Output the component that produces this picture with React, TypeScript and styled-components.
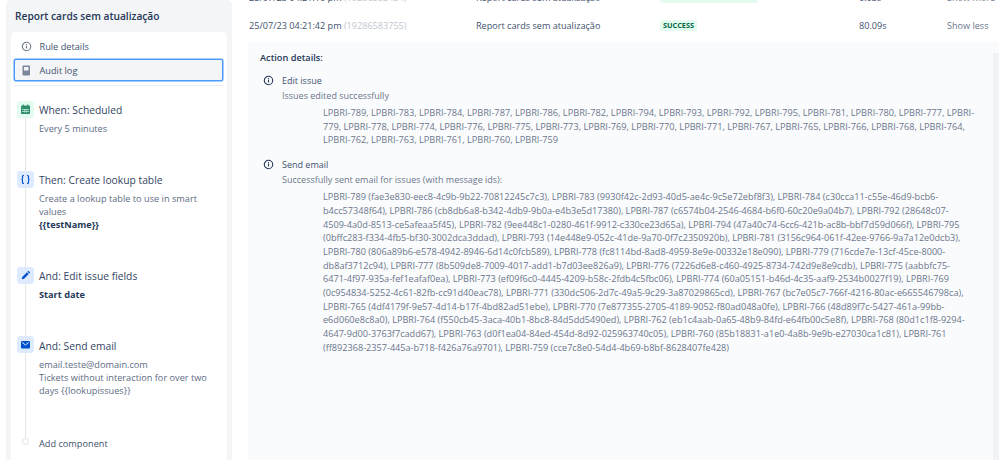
import React from "react";
import styled, { createGlobalStyle } from "styled-components";

const Global = createGlobalStyle`
  html, body { margin: 0; padding: 0; background: #fff; height: 460px; overflow: hidden; }
  body { font-family: "Open Sans", "Noto Sans", "Liberation Sans", sans-serif; font-size: 9.2px; color: #42526e; }
`;

const Page = styled.div`
  display: flex;
  width: 999px;
  height: 460px;
  overflow: hidden;
`;
const Sidebar = styled.aside`
  flex: none;
  width: 226px;
  margin-left: 6px;
  padding: 0 5px;
  box-sizing: border-box;
  background: #f4f5f7;
  border-radius: 5px 5px 0 0;
  display: flex;
  flex-direction: column;
`;
const RuleTitle = styled.h1`
  margin: 0;
  height: 32px;
  padding-left: 4px;
  line-height: 33px;
  font-size: 10.2px;
  font-weight: 600;
  color: #253858;
  white-space: nowrap;
`;
const Card = styled.div`
  flex: 1;
  background: #fff;
  border-radius: 4px 4px 0 0;
  padding: 3px 3px 0;
`;
const NavItem = styled.div<{ $active?: boolean }>`
  display: flex;
  align-items: center;
  gap: 7px;
  height: 22px;
  width: 209px;
  padding-left: 5.5px;
  margin-bottom: 2px;
  box-sizing: border-box;
  border-radius: 2px;
  border: 1px solid ${(p) => (p.$active ? "#4c9aff" : "transparent")};
  box-shadow: ${(p) => (p.$active ? "0 0 0 0.5px #4c9aff" : "none")};
  background: ${(p) => (p.$active ? "#f4f5f7" : "transparent")};
  color: #42526e;
  font-size: 9.2px;
`;
const NavIcon = styled.span`
  width: 12px;
  display: flex;
  justify-content: center;
  color: #6b778c;
`;
const Divider = styled.div`
  height: 1px;
  width: 209px;
  background: #ebecf0;
  margin: 4px 0 15px;
`;
const Step = styled.div<{ $h: number }>`
  display: grid;
  grid-template-columns: 17px 1fr;
  column-gap: 5px;
  height: ${(p) => p.$h}px;
  margin-left: 3px;
`;
const Rail = styled.div`
  display: flex;
  flex-direction: column;
  align-items: center;
`;
const RailLine = styled.div`
  flex: 1;
  width: 1.5px;
  background: #e4e6ea;
`;
const IconBox = styled.div<{ $green?: boolean }>`
  flex: none;
  width: 17px;
  height: 17px;
  border-radius: 3px;
  display: flex;
  align-items: center;
  justify-content: center;
  background: ${(p) => (p.$green ? "#e3fcef" : "#deebff")};
  color: ${(p) => (p.$green ? "#2f8f6b" : "#0052cc")};
`;
const Dot = styled.div`
  width: 5px;
  height: 5px;
  border-radius: 50%;
  border: 1.5px solid #dfe1e6;
  background: #fff;
`;
const StepBody = styled.div<{ $top?: number }>`
  min-width: 0;
  padding-top: ${(p) => p.$top ?? 2}px;
`;
const StepTitle = styled.div`
  font-size: 10.3px;
  line-height: 15px;
  color: #344563;
  margin-bottom: 4px;
  white-space: nowrap;
`;
const StepText = styled.div`
  font-size: 9.2px;
  line-height: 13px;
  color: #5e6c84;
  white-space: nowrap;
`;
const StepStrong = styled(StepText)`
  font-weight: 700;
  color: #253858;
`;
const AddLabel = styled.div`
  font-size: 9.2px;
  line-height: 13px;
  color: #42526e;
  margin-top: -1px;
`;
const Main = styled.main`
  flex: 1;
  min-width: 0;
  margin-left: 16px;
`;
const LogTable = styled.div`
  margin-top: -17px;
`;
const LogRow = styled.div`
  display: grid;
  grid-template-columns: 227px 184px 199px 88px 52px;
  height: 28px;
  padding-left: 1px;
  align-items: center;
  font-size: 9.1px;
  color: #42526e;
  white-space: nowrap;
`;
const LogId = styled.span`
  color: #c1c7d0;
`;
const Badge = styled.span`
  justify-self: start;
  padding: 0 3px;
  height: 11px;
  line-height: 11px;
  border-radius: 2px;
  background: #e3fcef;
  color: #006644;
  font-size: 7.3px;
  font-weight: 700;
`;
const Muted = styled.span`
  color: #6b778c;
`;
const Details = styled.section`
  height: 420px;
  margin-top: 3px;
  padding: 9px 0 0 12px;
  background: #fafbfc;
  position: relative;
`;
const DetailHead = styled.div`
  font-size: 9.2px;
  font-weight: 600;
  color: #253858;
  line-height: 14px;
  margin-bottom: 8px;
`;
const ScrollStrip = styled.div`
  position: absolute;
  right: 0;
  top: 11px;
  bottom: 0;
  width: 6px;
  background: #f1f2f5;
`;
const Entry = styled.div`
  display: grid;
  grid-template-columns: 22px 1fr;
  margin-bottom: 10px;
`;
const EntryIcon = styled.div`
  display: flex;
  justify-content: flex-start;
  padding: 2px 0 0 3px;
  color: #253858;
`;
const EntryTitle = styled.div`
  font-size: 9px;
  line-height: 15px;
  color: #42526e;
`;
const EntrySub = styled.div`
  font-size: 9px;
  line-height: 16px;
  color: #6b778c;
`;
const IdList = styled.div<{ $size: number }>`
  margin: 2px 0 0 41px;
  font-size: ${(p) => p.$size}px;
  line-height: 13.7px;
  color: #6b778c;
`;
const IdLine = styled.div`
  white-space: nowrap;
`;

const InfoIcon = ({ size = 12 }: { size?: number }) => (
  <svg width={size} height={size} viewBox="0 0 12 12" fill="none">
    <circle cx="6" cy="6" r="4.6" stroke="currentColor" strokeWidth="1.2" />
    <rect x="5.4" y="5.2" width="1.2" height="3" fill="currentColor" />
    <rect x="5.4" y="3.4" width="1.2" height="1.2" fill="currentColor" />
  </svg>
);

const editLines = [
  "LPBRI-789, LPBRI-783, LPBRI-784, LPBRI-787, LPBRI-786, LPBRI-782, LPBRI-794, LPBRI-793, LPBRI-792, LPBRI-795, LPBRI-781, LPBRI-780, LPBRI-777, LPBRI-",
  "779, LPBRI-778, LPBRI-774, LPBRI-776, LPBRI-775, LPBRI-773, LPBRI-769, LPBRI-770, LPBRI-771, LPBRI-767, LPBRI-765, LPBRI-766, LPBRI-768, LPBRI-764,",
  "LPBRI-762, LPBRI-763, LPBRI-761, LPBRI-760, LPBRI-759",
];
const mailLines = [
  "LPBRI-789 (fae3e830-eec8-4c9b-9b22-70812245c7c3), LPBRI-783 (9930f42c-2d93-40d5-ae4c-9c5e72ebf8f3), LPBRI-784 (c30cca11-c55e-46d9-bcb6-",
  "b4cc57348f64), LPBRI-786 (cb8db6a8-b342-4db9-9b0a-e4b3e5d17380), LPBRI-787 (c6574b04-2546-4684-b6f0-60c20e9a04b7), LPBRI-792 (28648c07-",
  "4509-4a0d-8513-ce5afeaa5f45), LPBRI-782 (9ee448c1-0280-461f-9912-c330ce23d65a), LPBRI-794 (47a40c74-6cc6-421b-ac8b-bbf7d59d066f), LPBRI-795",
  "(0bffc283-f334-4fb5-bf30-3002dca3ddad), LPBRI-793 (14e448e9-052c-41de-9a70-0f7c2350920b), LPBRI-781 (3156c964-061f-42ee-9766-9a7a12e0dcb3),",
  "LPBRI-780 (806a89b6-e578-4942-8946-6d14c0fcb589), LPBRI-778 (fc8114bd-8ad8-4959-8e9e-00332e18e090), LPBRI-779 (716cde7e-13cf-45ce-8000-",
  "db8af3712c94), LPBRI-777 (8b509de8-7009-4017-add1-b7d03ee826a9), LPBRI-776 (7226d6e8-c460-4925-8734-742d9e8e9cdb), LPBRI-775 (aabbfc75-",
  "6471-4f97-935a-fef1eafaf0ea), LPBRI-773 (ef09f6c0-4445-4209-b58c-2fdb4c5fbc06), LPBRI-774 (60a05151-b46d-4c35-aaf9-2534b0027f19), LPBRI-769",
  "(0c954834-5252-4c61-82fb-cc91d40eac78), LPBRI-771 (330dc506-2d7c-49a5-9c29-3a87029865cd), LPBRI-767 (bc7e05c7-766f-4216-80ac-e665546798ca),",
  "LPBRI-765 (4df4179f-9e57-4d14-b17f-4bd82ad51ebe), LPBRI-770 (7e877355-2705-4189-9052-f80ad048a0fe), LPBRI-766 (48d89f7c-5427-461a-99bb-",
  "e6d060e8c8a0), LPBRI-764 (f550cb45-3aca-40b1-8bc8-84d5dd5490ed), LPBRI-762 (eb1c4aab-0a65-48b9-84fd-e64fb00c5e8f), LPBRI-768 (80d1c1f8-9294-",
  "4647-9d00-3763f7cadd67), LPBRI-763 (d0f1ea04-84ed-454d-8d92-025963740c05), LPBRI-760 (85b18831-a1e0-4a8b-9e9b-e27030ca1c81), LPBRI-761",
  "(ff892368-2357-445a-b718-f426a76a9701), LPBRI-759 (cce7c8e0-54d4-4b69-b8bf-8628407fe428)",
];

export default function App() {
  return (
    <Page>
      <Global />
      <Sidebar>
        <RuleTitle>Report cards sem atualização</RuleTitle>
        <Card>
          <NavItem>
            <NavIcon><InfoIcon size={11} /></NavIcon>
            Rule details
          </NavItem>
          <NavItem $active>
            <NavIcon>
              <svg width="9" height="11" viewBox="0 0 9 11">
                <rect x="0.5" y="0.5" width="7.5" height="10" rx="1" fill="#7a869a" />
                <rect x="2" y="2" width="4.5" height="3.5" fill="#f4f5f7" />
              </svg>
            </NavIcon>
            Audit log
          </NavItem>
          <Divider />
          <Step $h={70}>
            <Rail>
              <IconBox $green>
                <svg width="11" height="11" viewBox="0 0 11 11">
                  <rect x="1" y="1.5" width="9" height="8.5" rx="1" fill="currentColor" />
                  <rect x="2.6" y="0.5" width="1.2" height="2" fill="currentColor" />
                  <rect x="7.2" y="0.5" width="1.2" height="2" fill="currentColor" />
                  <rect x="2" y="5" width="7" height="0.8" fill="#bfe8d6" />
                  <rect x="2" y="7" width="7" height="0.8" fill="#bfe8d6" />
                  <rect x="4" y="5" width="0.7" height="3.6" fill="#bfe8d6" />
                  <rect x="6.3" y="5" width="0.7" height="3.6" fill="#bfe8d6" />
                </svg>
              </IconBox>
              <RailLine />
            </Rail>
            <StepBody>
              <StepTitle>When: Scheduled</StepTitle>
              <StepText>Every 5 minutes</StepText>
            </StepBody>
          </Step>
          <Step $h={96}>
            <Rail>
              <IconBox>
                <svg width="11" height="11" viewBox="0 0 11 11" fill="none" stroke="currentColor" strokeWidth="1.2">
                  <path d="M4 1.5H3.4c-.6 0-.9.4-.9 1v1.7c0 .7-.4 1.3-1 1.3.6 0 1 .6 1 1.3v1.7c0 .6.3 1 .9 1H4" />
                  <path d="M7 1.5h.6c.6 0 .9.4.9 1v1.7c0 .7.4 1.3 1 1.3-.6 0-1 .6-1 1.3v1.7c0 .6-.3 1-.9 1H7" />
                </svg>
              </IconBox>
              <RailLine />
            </Rail>
            <StepBody>
              <StepTitle>Then: Create lookup table</StepTitle>
              <StepText>Create a lookup table to use in smart</StepText>
              <StepText>values</StepText>
              <StepStrong>{"{{testName}}"}</StepStrong>
            </StepBody>
          </Step>
          <Step $h={69}>
            <Rail>
              <IconBox>
                <svg width="11" height="11" viewBox="0 0 11 11">
                  <path d="M2.3 6.9 6.9 2.3l1.8 1.8-4.6 4.6-2.4.6z" fill="currentColor" />
                  <path d="M7.5 1.7l.5-.5c.3-.3.6-.3.9 0l.9.9c.3.3.3.6 0 .9l-.5.5z" fill="currentColor" />
                </svg>
              </IconBox>
              <RailLine />
            </Rail>
            <StepBody>
              <StepTitle>And: Edit issue fields</StepTitle>
              <StepStrong>Start date</StepStrong>
            </StepBody>
          </Step>
          <Step $h={102}>
            <Rail>
              <IconBox>
                <svg width="11" height="11" viewBox="0 0 11 11">
                  <rect x="1" y="2" width="9" height="7.4" rx="1" fill="currentColor" />
                  <path d="M2.2 3.4 5.5 6l3.3-2.6" fill="none" stroke="#deebff" strokeWidth="1" />
                </svg>
              </IconBox>
              <RailLine />
            </Rail>
            <StepBody $top={3}>
              <StepTitle>And: Send email</StepTitle>
              <StepText>email.teste@domain.com</StepText>
              <StepText>Tickets without interaction for over two</StepText>
              <StepText>days {"{{lookupissues}}"}</StepText>
            </StepBody>
          </Step>
          <Step $h={20}>
            <Rail><Dot /></Rail>
            <StepBody $top={0}><AddLabel>Add component</AddLabel></StepBody>
          </Step>
        </Card>
      </Sidebar>
      <Main>
        <LogTable>
          <LogRow>
            <span>25/07/23 04:21:10 pm <LogId>(19286583434)</LogId></span>
            <span>Report cards sem atualização</span>
            <Badge>NO ACTIONS PERFORMED</Badge>
            <span>0.03s</span>
            <Muted>Show more</Muted>
          </LogRow>
          <LogRow>
            <span>25/07/23 04:21:42 pm <LogId>(19286583755)</LogId></span>
            <span>Report cards sem atualização</span>
            <Badge>SUCCESS</Badge>
            <span>80.09s</span>
            <Muted>Show less</Muted>
          </LogRow>
        </LogTable>
        <Details>
          <ScrollStrip />
          <DetailHead>Action details:</DetailHead>
          <Entry>
            <EntryIcon><InfoIcon size={11} /></EntryIcon>
            <div>
              <EntryTitle>Edit issue</EntryTitle>
              <EntrySub>Issues edited successfully</EntrySub>
              <IdList $size={9.2}>{editLines.map((l) => <IdLine key={l}>{l}</IdLine>)}</IdList>
            </div>
          </Entry>
          <Entry>
            <EntryIcon><InfoIcon size={11} /></EntryIcon>
            <div>
              <EntryTitle>Send email</EntryTitle>
              <EntrySub>Successfully sent email for issues (with message ids):</EntrySub>
              <IdList $size={9.15}>{mailLines.map((l) => <IdLine key={l}>{l}</IdLine>)}</IdList>
            </div>
          </Entry>
        </Details>
      </Main>
    </Page>
  );
}
